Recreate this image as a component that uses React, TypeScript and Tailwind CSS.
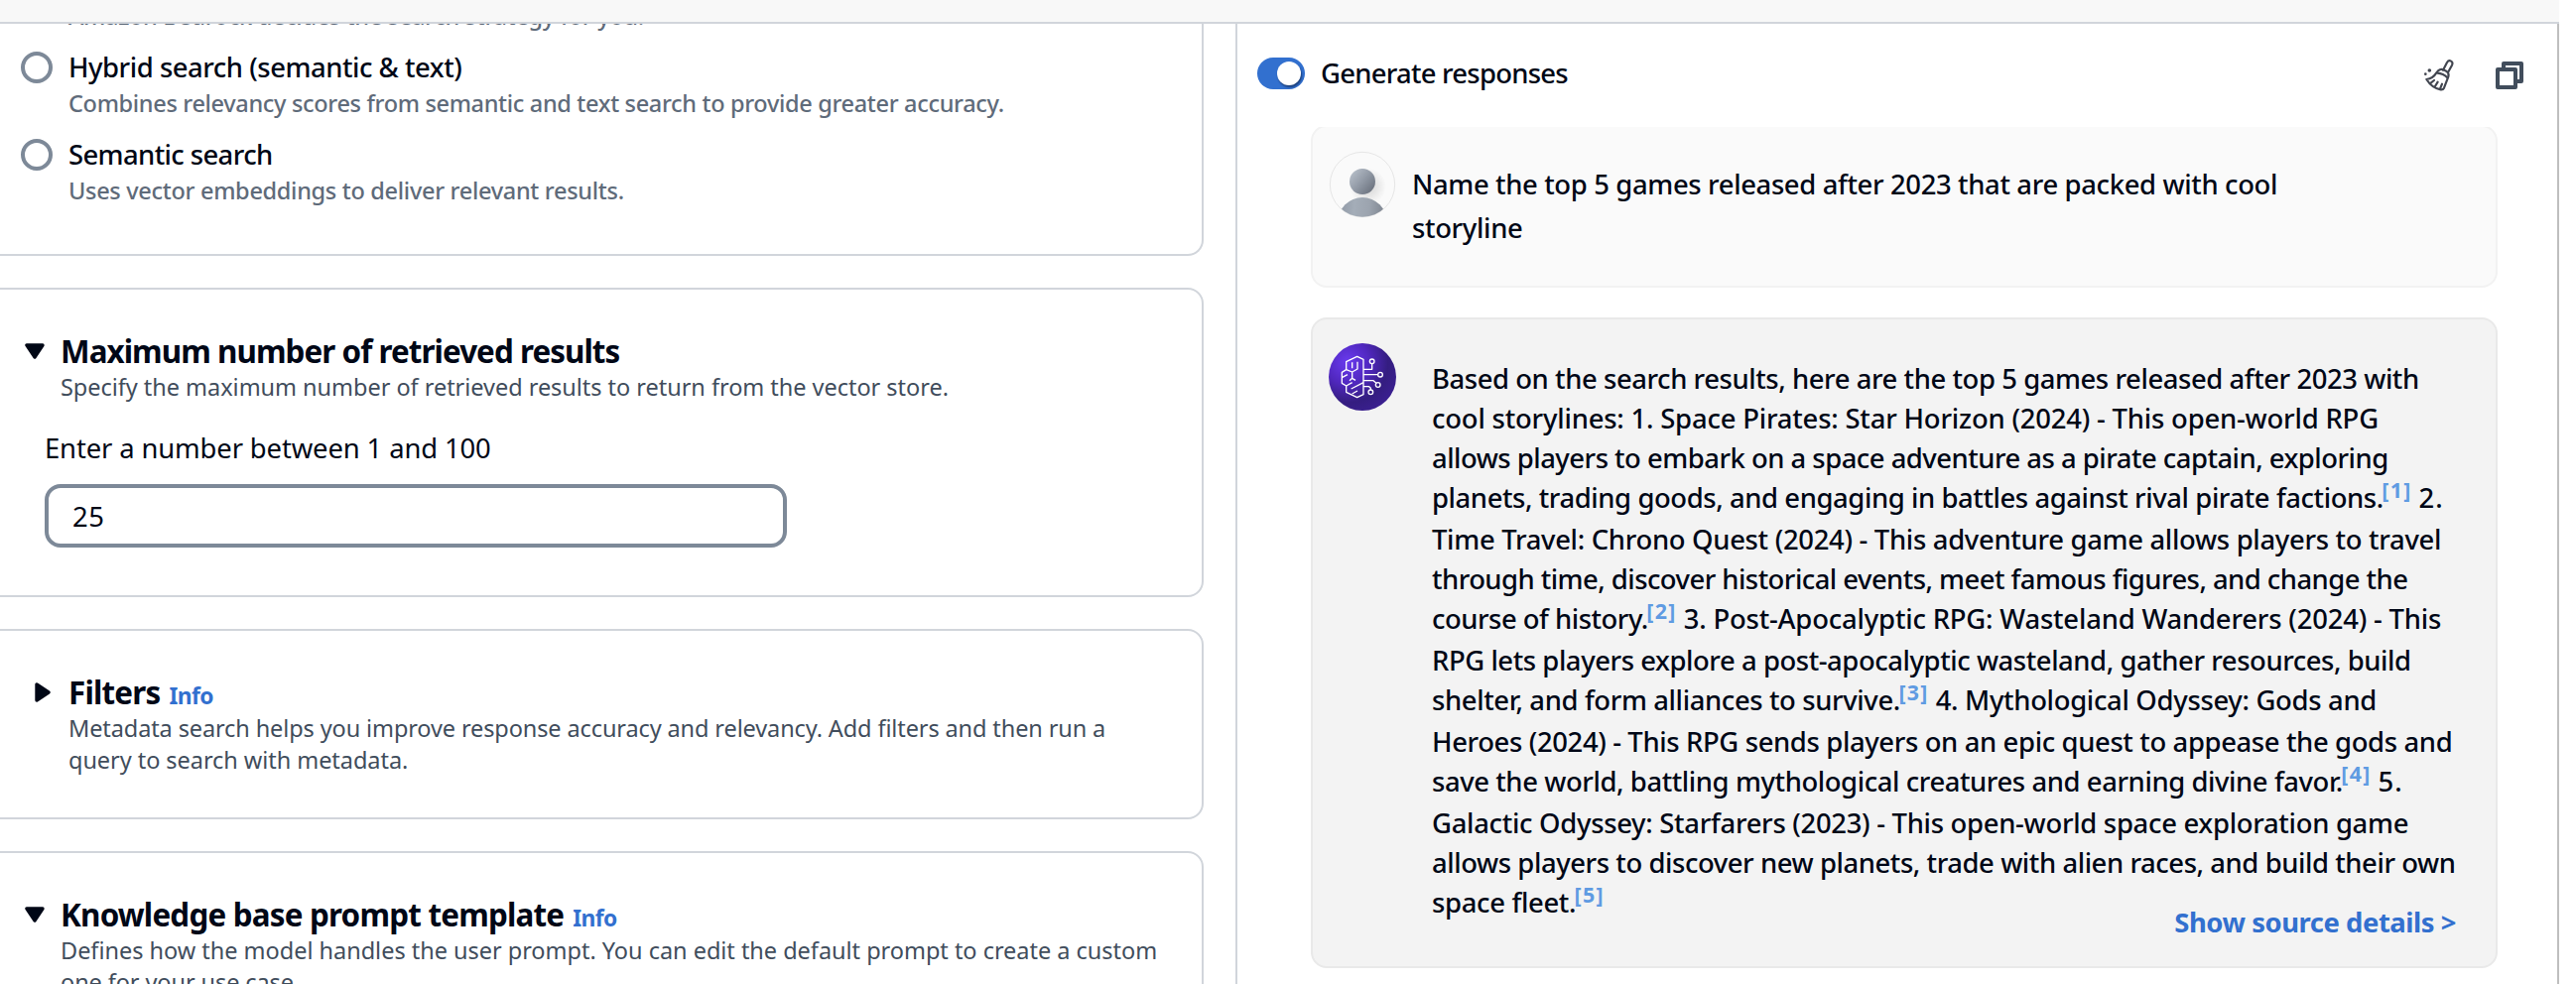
import type { ReactNode } from "react";

function Line({ className, children }: { className: string; children: ReactNode }) {
  return <div className={`whitespace-nowrap ${className}`}>{children}</div>;
}

const label = "text-[27.44px] leading-[40px] text-[#000716]";
const hint = "h-8 text-[23.52px] leading-8";
const heading = "h-10 text-[31.36px] leading-10 font-bold text-[#000716]";

function Info({ className }: { className: string }) {
  return (
    <a className={`text-[22.8px] leading-8 font-bold tracking-[-0.6px] text-[#3270cf] ${className}`}>Info</a>
  );
}

function Radio({ title, titleClass, text, textClass }: { title: string; titleClass: string; text: string; textClass: string }) {
  return (
    <div className="flex gap-4">
      <span className="mt-1 size-8 shrink-0 rounded-full border-4 border-[#7d8998] bg-white" />
      <div>
        <Line className={`${label} font-medium ${titleClass}`}>{title}</Line>
        <Line className={`${hint} font-medium text-[#5f6b7a] ${textClass}`}>{text}</Line>
      </div>
    </div>
  );
}

function CaretDown() {
  return (
    <svg width="20" height="16" viewBox="0 0 20 16" className="shrink-0">
      <path d="M2 2H18L10 14Z" fill="#000716" stroke="#000716" strokeWidth="3.4" strokeLinejoin="round" />
    </svg>
  );
}

function CaretRight() {
  return (
    <svg width="16" height="20" viewBox="0 0 16 20" className="shrink-0">
      <path d="M2 2V18L14 10Z" fill="#000716" stroke="#000716" strokeWidth="3.4" strokeLinejoin="round" />
    </svg>
  );
}

const card = "-ml-4 w-[1229px] shrink-0 rounded-2xl border-2 border-[#d1d5db] bg-white";

function SearchTypeCard() {
  return (
    <section className="-ml-4 h-[234px] w-[1229px] shrink-0 overflow-hidden rounded-b-2xl border-2 border-t-0 border-[#d1d5db] bg-white pl-[35px]">
      <div className="-mt-6 flex flex-col gap-4">
        <Line className={`${hint} pl-12 font-medium tracking-[-0.33px] text-[#5f6b7a]`}>
          Amazon Bedrock decides the search strategy for you.
        </Line>
        <Radio
          title="Hybrid search (semantic &amp; text)"
          titleClass="tracking-[-0.47px]"
          text="Combines relevancy scores from semantic and text search to provide greater accuracy."
          textClass="tracking-[-0.335px]"
        />
        <Radio
          title="Semantic search"
          titleClass="tracking-[-0.61px]"
          text="Uses vector embeddings to deliver relevant results."
          textClass="tracking-[-0.31px]"
        />
      </div>
    </section>
  );
}

function MaxResultsCard() {
  return (
    <section className={`${card} h-[312px] pt-[42px]`}>
      <div className="flex pl-[39px]">
        <div className="pt-3">
          <CaretDown />
        </div>
        <div className="pl-4">
          <Line className={`${heading} tracking-[-0.94px]`}>Maximum number of retrieved results</Line>
          <Line className={`${hint} tracking-[-0.04px] text-[#414d5c]`}>
            Specify the maximum number of retrieved results to return from the vector store.
          </Line>
        </div>
      </div>
      <div className="pt-[26px] pl-[59px]">
        <Line className={`${label} tracking-[-0.14px]`}>Enter a number between 1 and 100</Line>
        <div className="mt-4 flex h-16 w-[748px] items-center rounded-2xl border-4 border-[#7d8998] bg-white pt-[2px] pl-6">
          <span className={`${label} tracking-[0.6px]`}>25</span>
        </div>
      </div>
    </section>
  );
}

function FiltersCard() {
  return (
    <section className={`${card} h-[192px] pt-[42px]`}>
      <div className="flex pl-[49px]">
        <div className="pt-[10px]">
          <CaretRight />
        </div>
        <div className="pl-[18px]">
          <Line className={`${heading} flex items-baseline`}>
            <span className="tracking-[-0.8px]">Filters</span>
            <Info className="ml-[9px]" />
          </Line>
          <Line className={`${hint} tracking-[-0.12px] text-[#414d5c]`}>
            Metadata search helps you improve response accuracy and relevancy. Add filters and then run a
          </Line>
          <Line className={`${hint} tracking-[-0.06px] text-[#414d5c]`}>query to search with metadata.</Line>
        </div>
      </div>
    </section>
  );
}

function PromptTemplateCard() {
  return (
    <section className={`${card} h-[312px] pt-[42px]`}>
      <div className="flex pl-[39px]">
        <div className="pt-3">
          <CaretDown />
        </div>
        <div className="pl-4">
          <Line className={`${heading} flex items-baseline`}>
            <span className="tracking-[-0.79px]">Knowledge base prompt template</span>
            <Info className="ml-[9px]" />
          </Line>
          <Line className={`${hint} tracking-[-0.03px] text-[#414d5c]`}>
            Defines how the model handles the user prompt. You can edit the default prompt to create a custom
          </Line>
          <Line className={`${hint} tracking-[-0.1px] text-[#414d5c]`}>one for your use case.</Line>
        </div>
      </div>
    </section>
  );
}

function BroomIcon() {
  return (
    <svg width="30" height="32" viewBox="0 0 90 96" fill="none" stroke="#424650" strokeWidth="6.5" strokeLinejoin="round" strokeLinecap="round">
      <path d="M57 32 L69 9 Q74 1 81 5 Q88 9 84 17 L72 39" />
      <path d="M42 34 Q50 27 59 31 L68 36 Q76 42 73 52 L60 86 Q57 92 50 91 Q24 87 7 60 Q27 57 37 40 Z" />
      <path d="M40 41 Q58 42 70 55" />
      <path d="M21 70 L30 63 M33 81 L41 68 M48 89 L54 74" />
      <circle cx="16" cy="33" r="5.5" fill="#424650" stroke="none" />
      <circle cx="4" cy="44" r="4" fill="#424650" stroke="none" />
    </svg>
  );
}

function CopyIcon() {
  return (
    <svg width="28" height="28" viewBox="0 0 28 28" fill="none" stroke="#414d5c" strokeWidth="4" strokeLinejoin="round">
      <rect x="2" y="8" width="18" height="18" />
      <path d="M8 6V2H26V20H22" />
    </svg>
  );
}

function UserAvatar() {
  return (
    <svg width="68" height="68" viewBox="0 0 204 204" className="shrink-0">
      <defs>
        <linearGradient id="head" x1="0.1" y1="0.1" x2="0.9" y2="0.8">
          <stop offset="0" stopColor="#b5bdc7" />
          <stop offset="0.5" stopColor="#939ba7" />
          <stop offset="1" stopColor="#6f7682" />
        </linearGradient>
        <linearGradient id="body" x1="0" y1="0" x2="1" y2="0.1">
          <stop offset="0" stopColor="#8d96a3" />
          <stop offset="0.35" stopColor="#a4adb8" />
          <stop offset="0.65" stopColor="#9ca4af" />
          <stop offset="1" stopColor="#7b828d" />
        </linearGradient>
        <radialGradient id="shade">
          <stop offset="0" stopColor="#000" stopOpacity="0.16" />
          <stop offset="1" stopColor="#000" stopOpacity="0" />
        </radialGradient>
        <clipPath id="disc">
          <circle cx="102" cy="102" r="98" />
        </clipPath>
      </defs>
      <circle cx="102" cy="102" r="98" fill="#fafafa" stroke="#e6e6e6" strokeWidth="3" />
      <g clipPath="url(#disc)">
        <circle cx="118" cy="108" r="56" fill="url(#shade)" />
        <circle cx="102" cy="215" r="74" fill="url(#body)" />
      </g>
      <circle cx="102" cy="93" r="39" fill="url(#head)" />
    </svg>
  );
}

function ModelAvatar() {
  return (
    <svg width="68" height="68" viewBox="9 18 204 204" className="shrink-0">
      <defs>
        <radialGradient id="orb" cx="0.28" cy="0.28" r="0.8">
          <stop offset="0" stopColor="#6a3bef" />
          <stop offset="0.4" stopColor="#5128c0" />
          <stop offset="0.75" stopColor="#341d80" />
          <stop offset="1" stopColor="#3a1f8f" />
        </radialGradient>
      </defs>
      <circle cx="111" cy="120" r="102" fill="url(#orb)" />
      <g fill="none" stroke="#fff" strokeWidth="4" strokeLinejoin="round">
        <path d="M114 67 L95 58 L62 74 V98 L49 106 V139 L62 147 V166 L95 182 L114 173 Z" />
        <path d="M80 76 V94 M96 74 V96 L80 105 L62 98 M80 105 V124 L72 131 M80 124 L90 130 M49 122 L66 113" />
        <path d="M62 147 L80 137 M77 156 L114 137 M80 171 L96 162" />
        <path d="M114 97 H140 V80 M114 113 H158 M114 131 H144 L153 139 M114 149 H131 L136 154 V159" />
        <circle cx="140" cy="73" r="7" />
        <circle cx="165" cy="113" r="7" />
        <circle cx="158" cy="144" r="7" />
        <circle cx="136" cy="166" r="7" />
      </g>
    </svg>
  );
}

function Cite({ n }: { n: number }) {
  return (
    <sup className="top-[-10px] mr-[7px] -ml-[1.5px] text-[21.4px] leading-none font-bold tracking-[1.3px] text-[#5f9be2]">[{n}]</sup>
  );
}

function ChatPanel() {
  return (
    <main className="flex w-[1334px] shrink-0 flex-col overflow-hidden border-x-2 border-r-[#bfbfbf] border-l-[#d1d5db] bg-white">
      <div className="flex h-[104px] shrink-0 items-start pl-5">
        <div className="mt-[34px] flex h-8 w-12 items-center justify-end rounded-full bg-[#3270cf] pr-1">
          <span className="size-6 rounded-full bg-white shadow-[1px_2px_2px_rgba(0,7,22,0.45)]" />
        </div>
        <Line className={`${label} mt-[30px] ml-4 font-medium tracking-[-0.75px]`}>Generate responses</Line>
        <div className="mt-9 mr-[34px] ml-auto flex items-start gap-[42px]">
          <BroomIcon />
          <div className="pt-[2px]">
            <CopyIcon />
          </div>
        </div>
      </div>

      <div className="flex flex-col gap-[30px] overflow-hidden pl-[74px]">
        <section className="-mt-[2px] flex h-[164px] w-[1196px] rounded-2xl border-2 border-[#f2f2f2] bg-[#fafafa] pt-6 pl-4">
          <UserAvatar />
          <div className="mt-[12px] ml-4 text-[27.44px] leading-[44px] font-medium text-[#000716]">
            <Line className="tracking-[-0.36px]">Name the top 5 games released after 2023 that are packed with cool</Line>
            <Line className="tracking-[-0.34px]">storyline</Line>
          </div>
        </section>

        <section className="flex h-[656px] w-[1196px] shrink-0 rounded-2xl border-2 border-[#e9e9e9] bg-[#f3f3f3] pt-6 pr-10 pl-4">
          <ModelAvatar />
          <div className="ml-9 flex grow flex-col pt-4 text-[27.44px] leading-[40px] font-medium text-[#000716]">
            <Line className="h-10 tracking-[-0.43px]">Based on the search results, here are the top 5 games released after 2023 with</Line>
            <Line className="h-10 tracking-[-0.2px]">cool storylines: 1. Space Pirates: Star Horizon (2024) - This open-world RPG</Line>
            <Line className="h-10 tracking-[-0.51px]">allows players to embark on a space adventure as a pirate captain, exploring</Line>
            <Line className="h-[42px] tracking-[-0.42px]">
              planets, trading goods, and engaging in battles against rival pirate factions.
              <Cite n={1} />
              <span className="tracking-[1px]">2.</span>
            </Line>
            <Line className="h-10 tracking-[-0.31px]">Time Travel: Chrono Quest (2024) - This adventure game allows players to travel</Line>
            <Line className="h-10 tracking-[-0.54px]">through time, discover historical events, meet famous figures, and change the</Line>
            <Line className="h-[42px] tracking-[-0.49px]">
              course of history.
              <Cite n={2} />
              <span className="tracking-[-0.19px]">3. Post-Apocalyptic RPG: Wasteland Wanderers (2024) - This</span>
            </Line>
            <Line className="h-10 tracking-[-0.44px]">RPG lets players explore a post-apocalyptic wasteland, gather resources, build</Line>
            <Line className="h-[42px] tracking-[-0.38px]">
              shelter, and form alliances to survive.
              <Cite n={3} />
              <span className="tracking-[-0.32px]">4. Mythological Odyssey: Gods and</span>
            </Line>
            <Line className="h-10 tracking-[-0.37px]">Heroes (2024) - This RPG sends players on an epic quest to appease the gods and</Line>
            <Line className="h-[42px] tracking-[-0.42px]">
              save the world, battling mythological creatures and earning divine favor.
              <Cite n={4} />
              <span className="tracking-[1px]">5.</span>
            </Line>
            <Line className="h-10 tracking-[-0.3px]">Galactic Odyssey: Starfarers (2023) - This open-world space exploration game</Line>
            <Line className="h-10 tracking-[-0.43px]">allows players to discover new planets, trade with alien races, and build their own</Line>
            <Line className="h-10 tracking-[-0.33px]">
              space fleet.
              <Cite n={5} />
            </Line>
            <a className="-mt-[20px] self-end font-bold tracking-[-0.46px] whitespace-nowrap text-[#3270cf]">Show source details &gt;</a>
          </div>
        </section>
      </div>
    </main>
  );
}

export default function App() {
  return (
    <div className="flex h-[992px] w-[2596px] flex-col overflow-hidden bg-white font-['Noto_Sans',sans-serif]">
      <header className="h-6 w-[2579px] shrink-0 border-b-2 border-[#d1d5db] bg-[#f8f8f8]" />
      <div className="flex h-[968px]">
        <aside className="flex w-[1245px] shrink-0 flex-col gap-8 overflow-hidden">
          <SearchTypeCard />
          <MaxResultsCard />
          <FiltersCard />
          <PromptTemplateCard />
        </aside>
        <ChatPanel />
      </div>
    </div>
  );
}
